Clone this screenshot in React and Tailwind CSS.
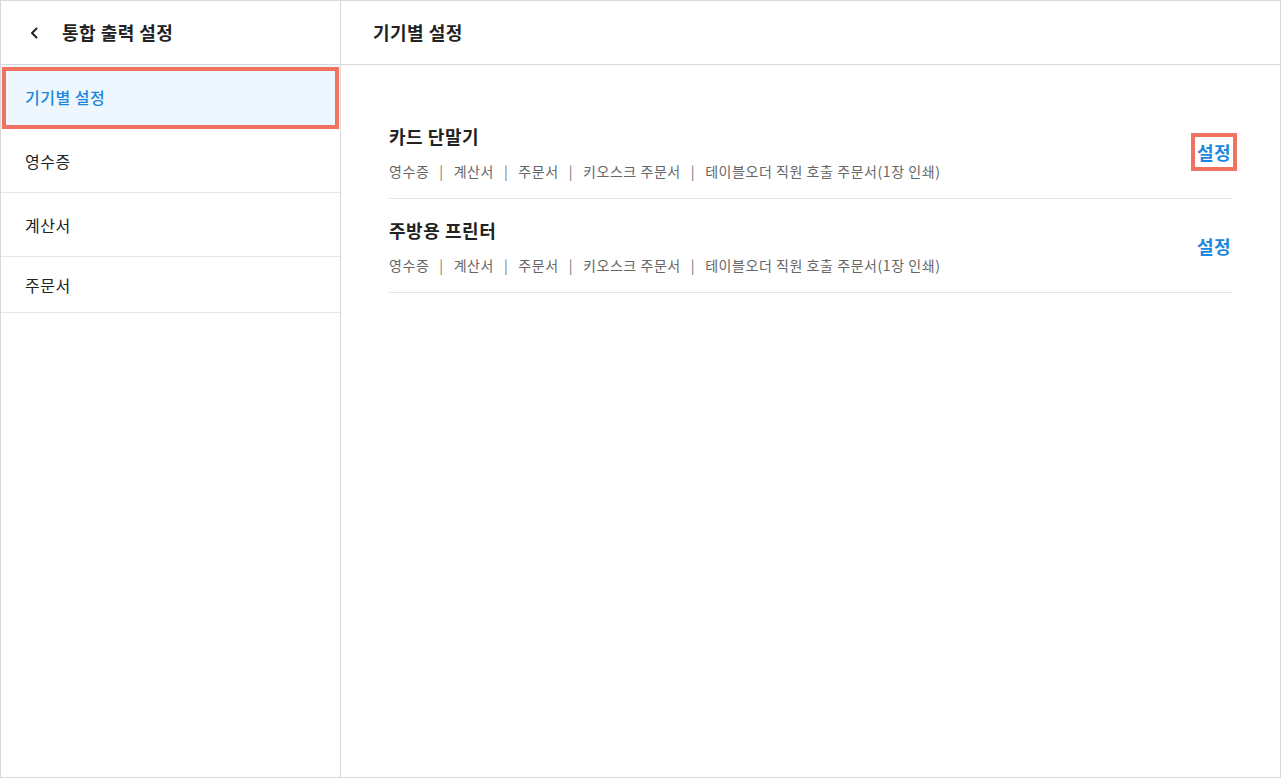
import React from "react";

const FONT = { fontFamily: '"Noto Sans CJK KR", "Noto Sans", sans-serif' };

const tags = ["영수증", "계산서", "주문서", "키오스크 주문서", "테이블오더 직원 호출 주문서(1장 인쇄)"];

function Tags() {
  return (
    <div className="mt-3 flex items-center text-[14px] leading-5 tracking-[0.04em] text-[#666666]">
      {tags.map((t, i) => (
        <React.Fragment key={t}>
          {i > 0 && <span className="mx-[10px] text-[#777777]">|</span>}
          <span>{t}</span>
        </React.Fragment>
      ))}
    </div>
  );
}

function Device({ title, highlight }) {
  return (
    <div className="flex items-center justify-between border-b border-[#e6e6e6] pt-[18px] pb-[17px]">
      <div>
        <div className="text-[18px] font-semibold leading-[26px] tracking-[0.03em] text-[#222222]">{title}</div>
        <Tags />
      </div>
      <button
        className={
          "px-[2px] py-[2px] text-[18px] font-bold leading-[26px] text-[#1b87e0] -mr-px " +
          (highlight ? "outline-4 outline-[#f07261]" : "")
        }
      >
        설정
      </button>
    </div>
  );
}

export default function App() {
  return (
    <div style={FONT} className="flex h-[778px] w-[1281px] border border-[#d9d9d9] bg-white text-[#222222] tracking-[0.03em]">
      <aside className="flex w-[340px] shrink-0 flex-col border-r border-[#d9d9d9]">
        <div className="flex h-16 items-center border-b border-[#d9d9d9] pl-[28px]">
          <svg width="12" height="14" viewBox="0 0 12 14" className="mr-[21px]">
            <path d="M7.5 2.5 L3 7 L7.5 11.5" fill="none" stroke="#222" strokeWidth="2" strokeLinecap="round" strokeLinejoin="round" />
          </svg>
          <span className="text-[18px] font-bold">통합 출력 설정</span>
        </div>
        <div className="relative flex h-16 items-center bg-[#eef6fe] pl-6 text-[16px] font-medium text-[#1b87e0]">
          기기별 설정
          <div className="absolute inset-x-[1px] top-[2px] bottom-0 border-[4px] border-[#f07261]" />
        </div>
        <div className="flex h-16 items-center border-b border-[#e6e6e6] pl-6 text-[16px]">영수증</div>
        <div className="flex h-16 items-center border-b border-[#e6e6e6] pl-6 text-[16px]">계산서</div>
        <div className="flex h-14 items-center border-b border-[#e6e6e6] pl-6 text-[16px]">주문서</div>
      </aside>
      <main className="flex flex-1 flex-col">
        <div className="flex h-16 shrink-0 items-center border-b border-[#d9d9d9] pl-8 text-[18px] font-bold">
          기기별 설정
        </div>
        <div className="px-12 pt-10">
          <Device title="카드 단말기" highlight />
          <Device title="주방용 프린터" />
        </div>
      </main>
    </div>
  );
}
